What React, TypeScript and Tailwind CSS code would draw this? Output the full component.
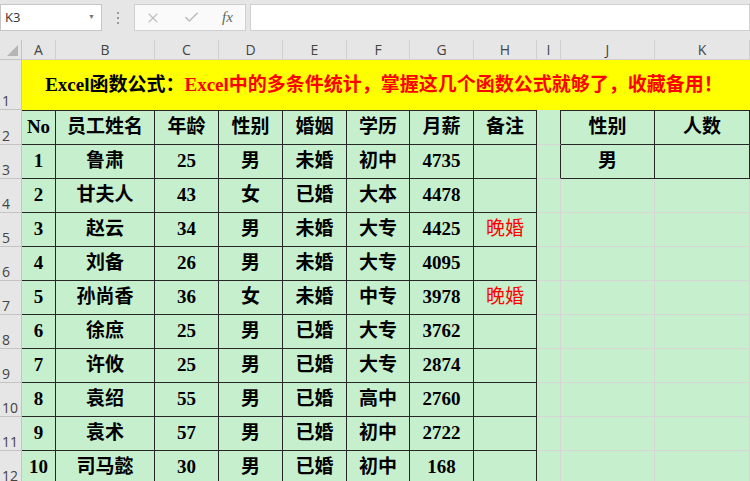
import React from 'react';
import { X, Check } from 'lucide-react';

const cols = ['A', 'B', 'C', 'D', 'E', 'F', 'G', 'H', 'I', 'J', 'K'];

const rows: (string | number)[][] = [
  [1, '鲁肃', 25, '男', '未婚', '初中', 4735, ''],
  [2, '甘夫人', 43, '女', '已婚', '大本', 4478, ''],
  [3, '赵云', 34, '男', '未婚', '大专', 4425, '晚婚'],
  [4, '刘备', 26, '男', '未婚', '大专', 4095, ''],
  [5, '孙尚香', 36, '女', '未婚', '中专', 3978, '晚婚'],
  [6, '徐庶', 25, '男', '已婚', '大专', 3762, ''],
  [7, '许攸', 25, '男', '已婚', '大专', 2874, ''],
  [8, '袁绍', 55, '男', '已婚', '高中', 2760, ''],
  [9, '袁术', 57, '男', '已婚', '初中', 2722, ''],
  [10, '司马懿', 30, '男', '已婚', '初中', 168, ''],
];

const head = ['No', '员工姓名', '年龄', '性别', '婚姻', '学历', '月薪', '备注'];

const dark = 'flex items-center justify-center border-r border-b border-[#262626] bg-[#c6efce] font-bold text-black';
const light = 'border-r border-b border-[#d6d6d6] bg-[#c6efce]';
const iDark = 'border-r border-b border-r-[#262626] border-b-[#d6d6d6] bg-[#c6efce]';
const rowHead = 'flex items-end pl-[2px] leading-none pb-[1px] border-r border-b border-[#c4c4c4] bg-[#e6e6e6] text-[14px] text-[#444]';

const App: React.FC = () => {
  return (
    <div
      className="w-[750px] h-[481px] overflow-hidden bg-[#e6e6e6]"
      style={{ fontFamily: '"Liberation Serif", "Noto Sans CJK SC", serif' }}
    >
      {/* formula bar */}
      <div className="h-[40px] flex items-start pt-[4px] font-['Open_Sans',sans-serif]">
        <div className="w-[102px] h-[27px] bg-white border border-[#c6c6c6] flex items-center justify-between pl-[4px] pr-[6px] text-[13px] text-[#333]">
          <span>K3</span>
          <span className="text-[7px] text-[#777]">▼</span>
        </div>
        <div className="w-[32px] h-[27px] flex flex-col items-center justify-center gap-[3px]">
          <span className="w-[2px] h-[2px] bg-[#999]"></span>
          <span className="w-[2px] h-[2px] bg-[#999]"></span>
          <span className="w-[2px] h-[2px] bg-[#999]"></span>
        </div>
        <div className="w-[112px] h-[27px] bg-[#fafafa] border border-[#d0d0d0] flex items-center pl-[10px]">
          <X size={16} strokeWidth={1.6} className="text-[#bdbdbd]" />
          <Check size={17} strokeWidth={2.2} className="text-[#bdbdbd] ml-[22px]" />
          <span className="ml-[22px] italic text-[15px] text-[#5a6a5a] font-['Liberation_Serif',serif]">fx</span>
        </div>
        <div className="ml-[4px] flex-1 h-[27px] bg-white border border-[#d0d0d0]"></div>
      </div>

      {/* sheet */}
      <div className="grid grid-cols-[22px_34px_99px_64px_64px_64px_63px_64px_63px_24px_94px_95px] grid-rows-[20px_50px_35px_repeat(10,34px)]">
        {/* column headers */}
        <div className="relative border-r border-b border-[#c4c4c4] bg-[#e6e6e6]">
          <div className="absolute right-[3px] bottom-[3px] w-0 h-0 border-l-[11px] border-l-transparent border-b-[11px] border-b-[#b5b5b5]"></div>
        </div>
        {cols.map((c) => (
          <div
            key={c}
            className="flex items-center justify-center border-r border-b border-[#d0d0d0] bg-[#e6e6e6] text-[14px] text-[#444] font-['Open_Sans',sans-serif]"
          >
            {c}
          </div>
        ))}

        {/* row 1 */}
        <div className={rowHead + " font-['Open_Sans',sans-serif]"}>1</div>
        <div className="col-span-11 bg-[#ffff00] flex items-center justify-center pr-[4px] font-bold text-[19px]">
          <span className="text-black">Excel函数公式：</span>
          <span className="text-[#ff0000]">Excel中的多条件统计，掌握这几个函数公式就够了，收藏备用！</span>
        </div>

        {/* row 2 */}
        <div className={rowHead + " font-['Open_Sans',sans-serif]"}>2</div>
        {head.map((h) => (
          <div key={h} className={dark + ' border-t text-[19px]'}>
            {h}
          </div>
        ))}
        <div className={iDark}></div>
        <div className={dark + ' border-t text-[19px]'}>性别</div>
        <div className={dark + ' border-t text-[19px]'}>人数</div>

        {rows.map((r, i) => (
          <React.Fragment key={i}>
            <div className={rowHead + " font-['Open_Sans',sans-serif]"}>{i + 3}</div>
            {r.map((v, j) => (
              <div
                key={j}
                className={
                  j === 7
                    ? dark + ' text-[19px] !font-normal !text-[#ff0000]'
                    : dark + ' text-[19px]'
                }
              >
                {v}
              </div>
            ))}
            {i === 0 ? (
              <>
                <div className={iDark}></div>
                <div className={dark + ' text-[19px]'}>男</div>
                <div className={dark}></div>
              </>
            ) : (
              <>
                <div className={light}></div>
                <div className={light}></div>
                <div className={light}></div>
              </>
            )}
          </React.Fragment>
        ))}
      </div>
    </div>
  );
};

export default App;
